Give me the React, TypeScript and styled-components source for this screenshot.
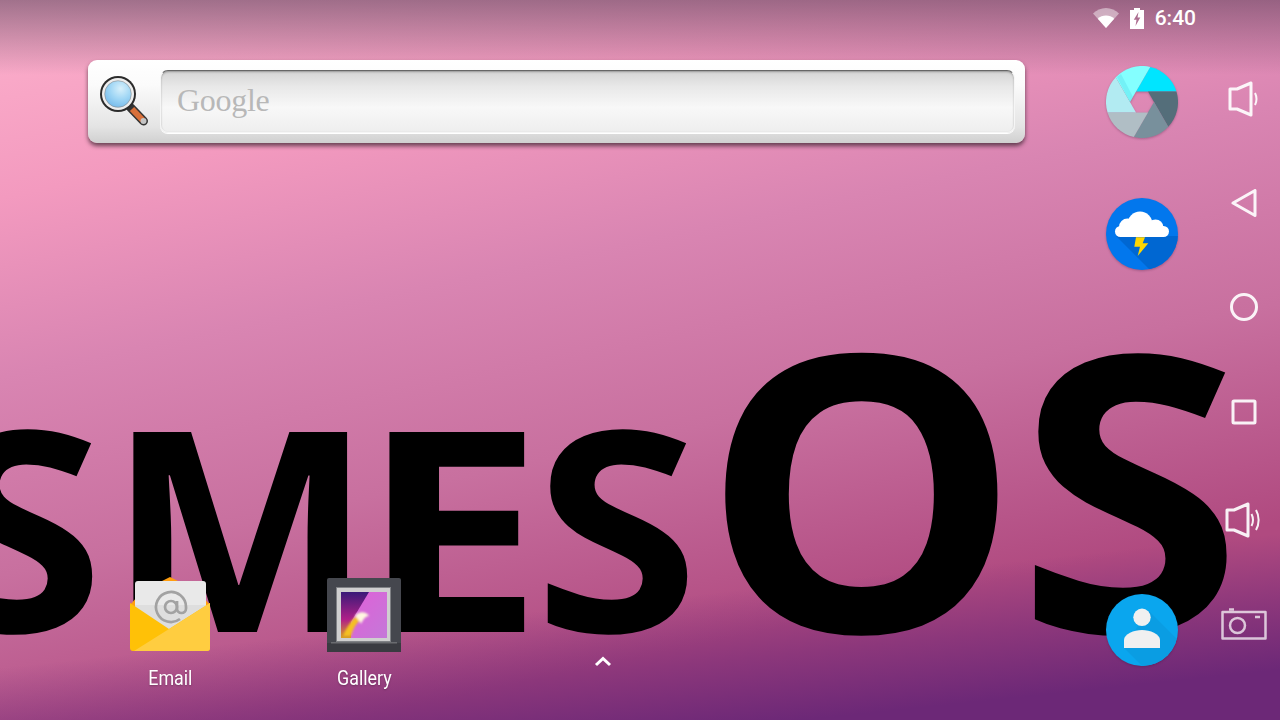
import React from 'react';
import styled, { createGlobalStyle } from 'styled-components';

const GlobalStyle = createGlobalStyle`
  html, body {
    margin: 0;
    padding: 0;
    width: 1280px;
    height: 720px;
    overflow: hidden;
    font-family: Roboto, "Liberation Sans", sans-serif;
  }
`;

const Screen = styled.div`
  position: relative;
  width: 1280px;
  height: 720px;
  overflow: hidden;
  display: flex;
  background:
    linear-gradient(180deg, rgba(70, 50, 75, 0.5) 0, rgba(70, 50, 75, 0) 75px),
    linear-gradient(174deg, rgba(104, 36, 118, 0) 664px, rgba(104, 36, 118, 0.5) 733px, #6c2877 800px),
    linear-gradient(168deg, #fdb2cd 0, #f39abf 20%, #d985b2 38%, #c8709f 58%, #b04a80 80%);
`;

const Wallpaper = styled.div`
  position: absolute;
  inset: 0;
  padding: 290px 0 0 0;
  display: flex;
  align-items: baseline;
  font-family: "Open Sans", sans-serif;
  font-weight: 700;
  line-height: 1;
  color: #000;
  white-space: nowrap;
`;

const SmallWord = styled.span`
  font-size: 280px;
  margin-left: -61px;
`;

const BigWord = styled.span`
  font-size: 385px;
  margin-left: 14px;
`;

// the wallpaper lettering is wider in places than the installed face, so each letter gets its own stretch
const Letter = styled.span<{ $stretch: number; $after?: number }>`
  display: inline-block;
  transform: scaleX(${(p) => p.$stretch});
  transform-origin: 0 50%;
  margin-right: ${(p) => p.$after ?? 0}px;
`;

const Main = styled.div`
  position: relative;
  flex: 1;
  display: flex;
  flex-direction: column;
`;

const StatusBar = styled.div`
  height: 36px;
  display: flex;
  align-items: center;
  justify-content: flex-end;
  padding-right: 12px;
  gap: 11px;
  color: #fff;
`;

const Clock = styled.span`
  font-size: 21px;
  font-weight: 500;
`;

const Desktop = styled.div`
  flex: 1;
  display: flex;
`;

const Home = styled.div`
  flex: 1;
  display: flex;
  flex-direction: column;
  justify-content: space-between;
  padding: 24px 0 31px 73px;
`;

const SearchBar = styled.div`
  margin-left: 15px;
  width: 937px;
  height: 83px;
  box-sizing: border-box;
  padding: 10px 10px 10px 12px;
  display: flex;
  align-items: stretch;
  gap: 10px;
  border-radius: 9px;
  background: linear-gradient(180deg, #ffffff 0, #fbfbfb 30%, #e4e4e4 80%, #d0d0d0 100%);
  box-shadow: 0 3px 4px rgba(50, 30, 40, 0.7);
`;

const SearchIcon = styled.div`
  width: 50px;
  display: flex;
  align-items: center;
`;

const SearchField = styled.div`
  flex: 1;
  box-sizing: border-box;
  padding: 0 0 2px 16px;
  display: flex;
  align-items: center;
  border-radius: 8px;
  border: 1px solid #f6f6f6;
  border-top-color: #666;
  background: linear-gradient(180deg, #d4d4d4 0, #e8e8e8 25%, #f8f8f8 60%, #eeeeee 100%);
  box-shadow: inset 0 1px 2px rgba(0, 0, 0, 0.3), 0 1px 0 #fff;
  font-family: "Liberation Serif", serif;
  font-size: 32px;
  letter-spacing: -0.3px;
  color: #b8b8b8;
`;

const AppRow = styled.div`
  display: grid;
  grid-template-columns: 194px 194px 284px;
  align-items: end;
`;

const AppTile = styled.div`
  display: flex;
  flex-direction: column;
  align-items: center;
  gap: 13px;
`;

const AppLabel = styled.span`
  display: block;
  color: #fff;
  font-size: 20.5px;
  line-height: 22px;
  transform: scaleX(0.87);
  text-shadow: 0 1px 2px rgba(0, 0, 0, 0.25);
`;

const AppGlyph = styled.div`
  height: 78px;
  display: flex;
  align-items: center;
  justify-content: center;
`;

const DrawerHandle = styled.div`
  display: flex;
  justify-content: center;
  padding-bottom: 22px;
`;

const Dock = styled.div`
  width: 72px;
  margin-right: 30px;
  display: flex;
  flex-direction: column;
  justify-content: space-between;
  padding: 30px 0 54px;
`;

const DockUpper = styled.div`
  display: flex;
  flex-direction: column;
  gap: 60px;
`;

const RoundIcon = styled.svg`
  display: block;
  width: 72px;
  height: 72px;
  filter: drop-shadow(0 1px 1px rgba(60, 20, 50, 0.3));
`;

const NavRail = styled.div`
  position: relative;
  width: 72px;
  padding-top: 47px;
  display: grid;
  grid-auto-rows: 104px;
  justify-items: center;
  align-items: center;
  align-content: start;
`;

const NavGlyph = styled.svg<{ $dim?: boolean; $nudge?: number }>`
  display: block;
  fill: none;
  stroke: #fff;
  stroke-linejoin: round;
  margin-top: ${(p) => p.$nudge ?? 0}px;
  opacity: ${(p) => (p.$dim ? 0.72 : 0.92)};
`;

const Wifi = () => (
  <svg width="26" height="20" viewBox="0 0 26 20">
    <path d="M0 5.500C3.500 2.200 8 0 13 0s9.500 2.200 13 5.500L13 20Z" fill="#fff" opacity="0.45" />
    <path d="M4.800 10.800C7 8.800 9.800 7.600 13 7.600s6 1.200 8.200 3.200L13 20Z" fill="#fff" />
  </svg>
);

const Battery = () => (
  <svg width="14" height="21" viewBox="0 0 14 21">
    <path
      fillRule="evenodd"
      fill="#fff"
      d="M4 0h6v2h4v19H0V2h4ZM8.500 4 3.800 11.800h2.700L5.500 18 10.300 9.500H7.500Z"
    />
  </svg>
);

const BLADE = 'M44.200 0.950A36 36 0 0 1 70.500 25.600L30 25.600Z';

const Aperture = () => (
  <RoundIcon viewBox="0 0 72 72">
    <path d={BLADE} fill="#00e5ff" />
    <path d={BLADE} fill="#546e7a" transform="rotate(60 36 36)" />
    <path d={BLADE} fill="#78909c" transform="rotate(120 36 36)" />
    <path d={BLADE} fill="#b0bec5" transform="rotate(180 36 36)" />
    <path d={BLADE} fill="#b2ebf2" transform="rotate(240 36 36)" />
    <path d={BLADE} fill="#84ffff" transform="rotate(300 36 36)" />
    <path d="M11 11 24 36 27 31 15 8Z" fill="#4dd0e1" opacity="0.3" />
  </RoundIcon>
);

const Weather = () => (
  <RoundIcon viewBox="0 0 72 72">
    <defs>
      <clipPath id="weatherDisc">
        <circle cx="36" cy="36" r="36" />
      </clipPath>
    </defs>
    <circle cx="36" cy="36" r="36" fill="#0277ed" />
    <path d="M10 38 44 72H72V38Z" fill="#0067d2" clipPath="url(#weatherDisc)" />
    <g fill="#fff">
      <rect x="9" y="28" width="54" height="11" rx="5.500" />
      <circle cx="34" cy="26" r="12.500" />
      <circle cx="21.500" cy="29" r="8.500" />
      <circle cx="49.500" cy="29.500" r="8" />
    </g>
    <path d="M30 39.300H39L36.700 45.300H42.300L31.700 58 34 48.700H28.300Z" fill="#ffd600" />
  </RoundIcon>
);

const Contacts = () => (
  <RoundIcon viewBox="0 0 72 72">
    <defs>
      <clipPath id="contactDisc">
        <circle cx="36" cy="36" r="36" />
      </clipPath>
    </defs>
    <circle cx="36" cy="36" r="36" fill="#0aa6ee" />
    <path d="M42 16 72 46V72H36L18 54Z" fill="#0a9de3" clipPath="url(#contactDisc)" />
    <circle cx="36" cy="23.300" r="8.700" fill="#f0f0f0" />
    <path d="M18 54V46C18 40 28 36 36 36s18 4 18 10v8Z" fill="#f0f0f0" />
  </RoundIcon>
);

const Magnifier = () => (
  <svg width="50" height="51" viewBox="0 0 50 51">
    <defs>
      <radialGradient id="lensFill" cx="0.6" cy="0.3" r="0.8">
        <stop offset="0" stopColor="#d8f0fb" />
        <stop offset="0.5" stopColor="#9fd6f5" />
        <stop offset="1" stopColor="#6fb6ea" />
      </radialGradient>
    </defs>
    <path d="M31 32 43.500 45" stroke="#333" strokeWidth="9" strokeLinecap="round" />
    <path d="M32 33 42.500 44" stroke="#d9703a" strokeWidth="6" />
    <circle cx="43.500" cy="45" r="3" fill="#c4c4c4" />
    <circle cx="18" cy="18" r="18" fill="#2b2b2b" />
    <circle cx="18" cy="18" r="16" fill="#eee" />
    <circle cx="18" cy="18" r="13.300" fill="url(#lensFill)" stroke="#8a8a8a" strokeWidth="0.600" />
  </svg>
);

const EmailIcon = () => (
  <svg width="82" height="76" viewBox="0 0 82 76">
    <path d="M41 0 49 4H33ZM1 40V28L8 20H74L81 28V40Z" fill="#ff9e10" />
    <path d="M6 7a3 3 0 0 1 3-3h65a3 3 0 0 1 3 3v55H6Z" fill="#e9e9e9" />
    <path d="M6 28H77V62H6Z" fill="#dedede" />
    <g transform="translate(24 12) scale(1.500)" fill="none" stroke="#a2a2a2" strokeWidth="1.800">
      <circle cx="12" cy="12" r="4" />
      <path d="M16 8v5a3 3 0 0 0 6 0v-1a10 10 0 1 0-4 8" />
    </g>
    <path d="M1 26 40 52 81 26V71a3 3 0 0 1-3 3H4a3 3 0 0 1-3-3Z" fill="#ffc107" />
    <path d="M40 52 81 26V71a3 3 0 0 1-3 3H5Z" fill="#ffcd40" />
  </svg>
);

const GalleryIcon = () => (
  <svg width="74" height="74" viewBox="0 0 74 74">
    <defs>
      <linearGradient id="galleryDark" x1="0" y1="0" x2="0" y2="1">
        <stop offset="0" stopColor="#3a1a78" />
        <stop offset="0.6" stopColor="#b02088" />
        <stop offset="1" stopColor="#d8a020" />
      </linearGradient>
      <linearGradient id="galleryLight" x1="0" y1="0" x2="1" y2="1">
        <stop offset="0" stopColor="#e060d8" />
        <stop offset="1" stopColor="#c478d8" />
      </linearGradient>
      <filter id="softGlow">
        <feGaussianBlur stdDeviation="1.200" />
      </filter>
    </defs>
    <rect width="74" height="74" rx="2" fill="#45474e" />
    <rect x="0" y="65" width="74" height="9" fill="#3a3b41" />
    <rect x="4" y="64" width="66" height="1.500" fill="#6a6c70" />
    <rect x="9" y="9" width="55" height="55" fill="#7f8185" />
    <rect x="10" y="10" width="53" height="53" fill="#cfcfcf" />
    <rect x="14" y="14" width="46" height="46" fill="url(#galleryDark)" />
    <path d="M42 14H60V60H24L24 44Z" fill="url(#galleryLight)" />
    <g filter="url(#softGlow)">
      <path d="M16 58C20 48 26 40 32 36L36 40C30 44 26 50 24 58Z" fill="#f4c020" />
      <path d="M28 38C32 32 40 34 42 38 38 38 36 42 34 46 32 42 30 40 28 38Z" fill="#fff6e0" />
    </g>
  </svg>
);

const Chevron = () => (
  <svg width="18" height="11" viewBox="0 0 18 11">
    <path d="M2 9 9 2.500 16 9" fill="none" stroke="#fff" strokeWidth="3" />
  </svg>
);

export default function App() {
  return (
    <Screen>
      <GlobalStyle />
      <Wallpaper>
        <SmallWord>
          <Letter $stretch={1.07} $after={15}>S</Letter>
          <Letter $stretch={1} $after={-12}>M</Letter>
          <Letter $stretch={1.17} $after={17}>E</Letter>
          <Letter $stretch={1.07}>S</Letter>
        </SmallWord>
        <BigWord>
          <Letter $stretch={1.04} $after={7}>O</Letter>
          <Letter $stretch={1.07}>S</Letter>
        </BigWord>
      </Wallpaper>
      <Main>
        <StatusBar>
          <Wifi />
          <Battery />
          <Clock>6:40</Clock>
        </StatusBar>
        <Desktop>
          <Home>
            <SearchBar>
              <SearchIcon>
                <Magnifier />
              </SearchIcon>
              <SearchField>Google</SearchField>
            </SearchBar>
            <AppRow>
              <AppTile>
                <AppGlyph>
                  <EmailIcon />
                </AppGlyph>
                <AppLabel>Email</AppLabel>
              </AppTile>
              <AppTile>
                <AppGlyph>
                  <GalleryIcon />
                </AppGlyph>
                <AppLabel>Gallery</AppLabel>
              </AppTile>
              <DrawerHandle>
                <Chevron />
              </DrawerHandle>
            </AppRow>
          </Home>
          <Dock>
            <DockUpper>
              <Aperture />
              <Weather />
            </DockUpper>
            <Contacts />
          </Dock>
        </Desktop>
      </Main>
      <NavRail>
        <NavGlyph width="32" height="36" viewBox="0 0 32 36" strokeWidth="3">
          <path d="M2 8H9L23 2V34L9 28H2Z" />
          <path d="M27 12C29 16 29 20 27 24" strokeWidth="2" />
        </NavGlyph>
        <NavGlyph width="28" height="30" viewBox="0 0 28 30" strokeWidth="3">
          <path d="M3 15 25 2.500V27.500Z" />
        </NavGlyph>
        <NavGlyph width="30" height="30" viewBox="0 0 30 30" strokeWidth="3">
          <circle cx="15" cy="15" r="12.500" />
        </NavGlyph>
        <NavGlyph width="26" height="26" viewBox="0 0 26 26" strokeWidth="3" $nudge={1}>
          <rect x="2" y="2" width="22" height="22" rx="1" />
        </NavGlyph>
        <NavGlyph width="38" height="38" viewBox="0 0 38 38" strokeWidth="3" $nudge={10}>
          <path d="M2 9H9L23 3V35L9 29H2Z" />
          <path d="M26.500 13C28.500 17 28.500 21 26.500 25M31 9C34.500 15 34.500 23 31 29" strokeWidth="2" />
        </NavGlyph>
        <NavGlyph $dim width="46" height="32" viewBox="0 0 46 32" strokeWidth="2.500" $nudge={9}>
          <path d="M1.500 4H44.500V30.500H1.500Z" />
          <path d="M8 1.500H13M34 9H39" />
          <circle cx="16.500" cy="17.500" r="7.500" />
        </NavGlyph>
      </NavRail>
    </Screen>
  );
}
